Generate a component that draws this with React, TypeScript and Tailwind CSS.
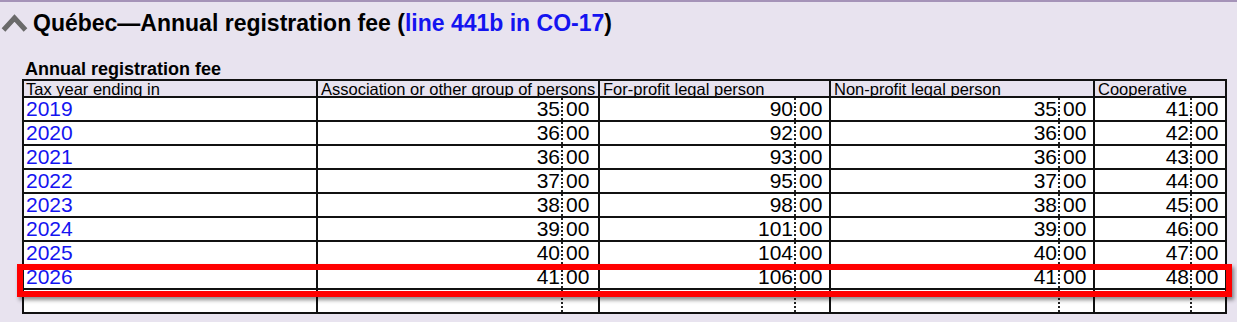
const rows = [
  { year: "2019", v: ["35", "90", "35", "41"] },
  { year: "2020", v: ["36", "92", "36", "42"] },
  { year: "2021", v: ["36", "93", "36", "43"] },
  { year: "2022", v: ["37", "95", "37", "44"] },
  { year: "2023", v: ["38", "98", "38", "45"] },
  { year: "2024", v: ["39", "101", "39", "46"] },
  { year: "2025", v: ["40", "104", "40", "47"] },
  { year: "2026", v: ["41", "106", "41", "48"] },
];

const headers = [
  "Association or other group of persons",
  "For-profit legal person",
  "Non-profit legal person",
  "Cooperative",
];

const Amount = ({ value }: { value: string }) => (
  <>
    <td className="border-2 border-r-0 border-[#111] px-[1px] text-right">{value}</td>
    <td className="border-2 border-l-0 border-[#111] p-0">
      <div className="h-[22px] border-l-2 border-dotted border-[#222] pl-[3px] text-left">
        {value ? "00" : ""}
      </div>
    </td>
  </>
);

const App = () => {
  return (
    <div
      className="relative h-[322px] w-[1237px] overflow-hidden border-t-2 border-[#a593b8] bg-[#e8e3ef] text-black"
      style={{ fontFamily: '"Liberation Sans", Arial, sans-serif' }}
    >
      {/* Section title */}
      <div className="flex h-[41px] items-center pl-[1px]">
        <svg width="27" height="20" viewBox="0 0 27 20" className="mr-[5px]">
          <polyline
            points="2.5,17 13.5,5 24.5,17"
            fill="none"
            stroke="#6a6a6a"
            strokeWidth="5"
            strokeLinejoin="miter"
          />
        </svg>
        <h2 className="text-[23px] font-bold leading-[26px]">
          Québec—Annual registration fee (
          <span className="text-[#1414f0]">line 441b in CO-17</span>)
        </h2>
      </div>

      <div className="ml-[22px] mt-[16px]">
        <div className="h-[20px] pl-[3px] text-[18px] font-bold leading-[20px]">
          Annual registration fee
        </div>
        <table className="table-fixed border-collapse text-[21px] leading-[22px]">
          <colgroup>
            <col className="w-[294px]" />
            <col className="w-[244px]" />
            <col className="w-[38px]" />
            <col className="w-[195px]" />
            <col className="w-[36px]" />
            <col className="w-[228px]" />
            <col className="w-[36px]" />
            <col className="w-[96px]" />
            <col className="w-[36px]" />
          </colgroup>
          <thead>
            <tr>
              <th className="border-2 border-[#111] p-0 text-left font-normal">
                <div className="h-[15px] overflow-hidden pl-[2px] text-[16.5px] leading-[17px]">
                  Tax year ending in
                </div>
              </th>
              {headers.map((h) => (
                <th key={h} colSpan={2} className="border-2 border-[#111] p-0 text-left font-normal">
                  <div className="h-[15px] overflow-hidden whitespace-nowrap pl-[3px] text-[16.5px] leading-[17px]">
                    {h}
                  </div>
                </th>
              ))}
            </tr>
          </thead>
          <tbody className="bg-white">
            {rows.map((r) => (
              <tr key={r.year}>
                <td className="border-2 border-[#111] py-0 pl-[2px] text-[#1414f0]">{r.year}</td>
                {r.v.map((x, i) => (
                  <Amount key={i} value={x} />
                ))}
              </tr>
            ))}
            <tr>
              <td className="h-[24px] border-2 border-[#111]" />
              {[0, 1, 2, 3].map((i) => (
                <Amount key={i} value="" />
              ))}
            </tr>
          </tbody>
        </table>
      </div>

      {/* highlight on current year */}
      <div className="absolute left-[17px] top-[262px] h-[33px] w-[1215px] border-[6px] border-[#ff0000] shadow-[2px_3px_4px_rgba(0,0,0,0.45)]" />
    </div>
  );
};

export default App;
